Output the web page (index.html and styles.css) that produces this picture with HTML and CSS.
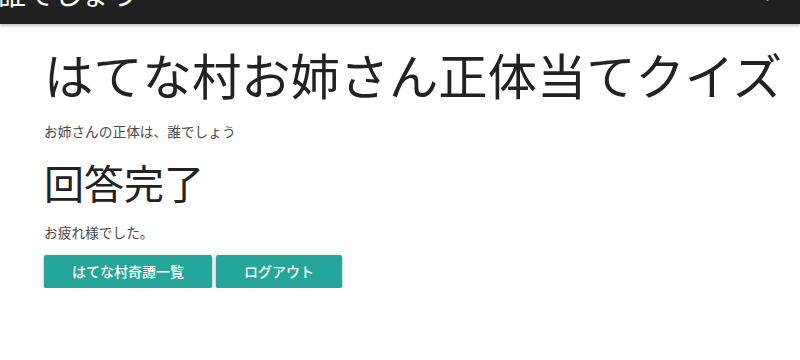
FILE: index.html
```html
<!DOCTYPE html>
<html lang="ja">
<head>
<meta charset="utf-8">
<title>はてな村お姉さん正体当てクイズ</title>
<link rel="stylesheet" href="styles.css">
</head>
<body>
<nav class="nav">
  <span class="brand">誰でしょう</span>
  <span class="navlink">ログ</span>
</nav>
<main class="content">
  <h1 class="title">はてな村お姉さん正体当てクイズ</h1>
  <p class="text sub">お姉さんの正体は、誰でしょう</p>
  <h2 class="heading">回答完了</h2>
  <p class="text done">お疲れ様でした。</p>
  <div class="actions">
    <a class="btn" href="#">はてな村奇譚一覧</a>
    <a class="btn" href="#">ログアウト</a>
  </div>
</main>
</body>
</html>
```
FILE: styles.css
```css
html, body {
  margin: 0;
  padding: 0;
  background: #fff;
  font-family: "Noto Sans CJK JP", "Noto Sans", sans-serif;
  color: #333;
}
.nav {
  height: 24px;
  background: #212121;
  overflow: hidden;
  display: flex;
  justify-content: space-between;
  box-shadow: 0 2px 2px rgba(0,0,0,0.16), 0 2px 8px rgba(0,0,0,0.08);
}
.brand {
  color: #fff;
  font-size: 28px;
  line-height: 28px;
  margin-top: -21px;
  margin-left: -2px;
}
.navlink {
  color: #fff;
  font-size: 14px;
  line-height: 14px;
  margin-top: -14px;
  margin-right: 22px;
}
.content {
  padding-left: 44px;
}
.title {
  margin: 22px 0 0;
  font-size: 49.3px;
  line-height: 56px;
  font-weight: 400;
  color: #222;
  white-space: nowrap;
}
.text {
  margin: 0;
  font-size: 13.7px;
  line-height: 20px;
  color: #4a4a4a;
}
.sub { margin-top: 19px; }
.heading {
  margin: 17px 0 0;
  font-size: 40px;
  line-height: 48px;
  font-weight: 400;
  color: #222;
}
.done { margin-top: 16px; }
.actions {
  margin-top: 13px;
  display: flex;
  gap: 4px;
}
.btn {
  display: inline-block;
  height: 33px;
  line-height: 33px;
  padding: 0 28px;
  background: #26a69a;
  color: #fff;
  font-size: 14px;
  font-weight: 500;
  text-decoration: none;
  border-radius: 2px;
  box-shadow: 0 2px 2px 0 rgba(0,0,0,0.14), 0 3px 1px -2px rgba(0,0,0,0.12), 0 1px 5px 0 rgba(0,0,0,0.2);
}
```
